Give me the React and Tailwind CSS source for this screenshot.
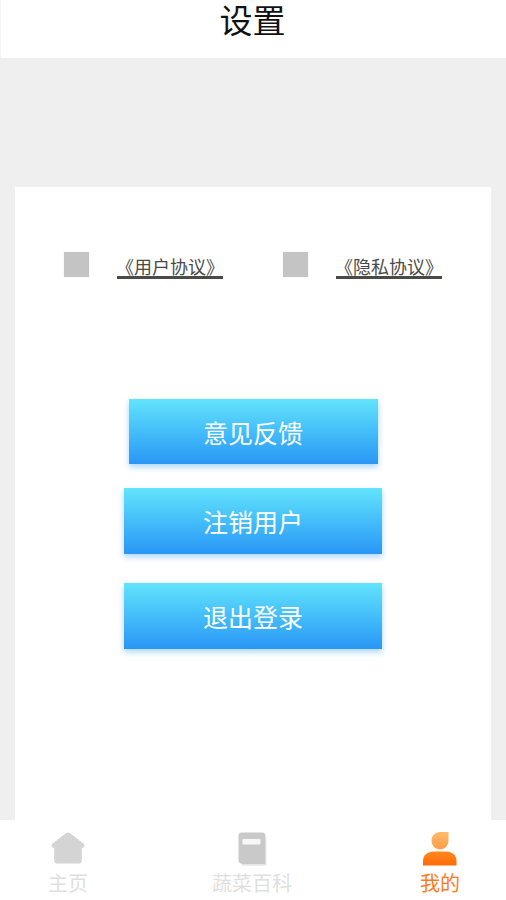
const cjk = { fontFamily: '"Noto Sans CJK SC", "Liberation Sans", sans-serif' };

function Agreement({ label }) {
  return (
    <div className="flex items-start">
      <div className="w-[25px] h-[25px] bg-[#c4c4c4] shadow-[0_0_1px_#dddddd]" />
      <div className="ml-[28px] mt-[3px] w-[106px] flex flex-col items-center">
        <span className="text-[18px] leading-[22px] text-[#4a4a48] whitespace-nowrap">{label}</span>
        <div className="h-[3px] w-[106px] bg-[#4a4a46] -mt-[1px]" />
      </div>
    </div>
  );
}

function ActionButton({ label, className }) {
  return (
    <button className={`flex items-center justify-center pt-[2px] bg-gradient-to-b from-[#62e4fb] to-[#2a96f5] shadow-[0_3px_6px_rgba(42,150,245,0.4)] text-white text-[25px] ${className}`}>
      {label}
    </button>
  );
}

function HomeIcon() {
  return (
    <svg width="34" height="32" viewBox="0 0 34 32" fill="#d4d4d4">
      <path d="M17 0.5 Q18 0.5 19 1.3 L32.5 11.5 Q34 13 33 15 L30.8 16.2 L30.8 28.5 Q30.8 31.5 27.8 31.5 L6.2 31.5 Q3.2 31.5 3.2 28.5 L3.2 16.2 L1 15 Q0 13 1.5 11.5 L15 1.3 Q16 0.5 17 0.5 Z" />
    </svg>
  );
}

function BookIcon() {
  return (
    <svg width="30" height="34" viewBox="0 0 30 34">
      <path d="M4.5 0.5 H25 Q28.5 0.5 28.5 4 V32 H5.5 Q1.5 31.5 1.5 28 V4 Q1.5 0.5 4.5 0.5 Z" fill="#c9c9c9" />
      <path d="M28.7 6 V32.8 H5" fill="none" stroke="#dedede" strokeWidth="1.2" />
      <rect x="5.5" y="7" width="18" height="5.5" rx="1" fill="#f7f7f7" />
    </svg>
  );
}

function UserIcon() {
  return (
    <svg width="34" height="34" viewBox="0 0 34 34">
      <defs>
        <linearGradient id="head" x1="0" y1="0" x2="0" y2="1">
          <stop offset="0" stopColor="#fdbc6b" />
          <stop offset="1" stopColor="#fd9c45" />
        </linearGradient>
        <linearGradient id="body" x1="0" y1="0" x2="0" y2="1">
          <stop offset="0" stopColor="#ff8a1f" />
          <stop offset="1" stopColor="#ff6a07" />
        </linearGradient>
      </defs>
      <path d="M16 0 H25.5 V9 A8.5 8.5 0 1 1 8.5 9 A8.5 8.5 0 0 1 16 0 Z" fill="url(#head)" />
      <path d="M0 33.5 V29 C0 23 5 19.5 10.5 19.5 H23.5 C29 19.5 33.5 23 33.5 29 V33.5 Z" fill="url(#body)" />
    </svg>
  );
}

function Tab({ icon, label, active, className }) {
  return (
    <div className={`flex flex-col items-center ${className}`}>
      <div className="h-[34px] flex items-start justify-center">{icon}</div>
      <span className={`mt-[3px] text-[20px] leading-[28px] whitespace-nowrap ${active ? 'text-[#ff7a1a]' : 'text-[#dfdfdf]'}`}>{label}</span>
    </div>
  );
}

export default function App() {
  return (
    <div className="relative w-[506px] h-[900px] overflow-hidden bg-[#efefef] flex flex-col" style={cjk}>
      <header className="h-[58px] bg-white border-l border-[#f5f5f5] pr-[2px] flex justify-center shrink-0">
        <h1 className="text-[33px] leading-[38px] text-[#111]">设置</h1>
      </header>

      <main className="mt-[129px] mx-[15px] flex-1 bg-white flex flex-col items-center">
        <div className="mt-[65px] self-start ml-[49px] flex gap-[60px]">
          <Agreement label="《用户协议》" />
          <Agreement label="《隐私协议》" />
        </div>
        <ActionButton label="意见反馈" className="mt-[120px] w-[249px] h-[65px]" />
        <ActionButton label="注销用户" className="mt-[24px] w-[258px] h-[66px]" />
        <ActionButton label="退出登录" className="mt-[29px] w-[258px] h-[66px]" />
      </main>

      <nav className="absolute bottom-0 left-0 right-0 h-[80px] bg-white pt-[12px] flex pl-[48px]">
        <Tab icon={<HomeIcon />} label="主页" className="w-[40px]" />
        <Tab icon={<BookIcon />} label="蔬菜百科" className="ml-[124px] w-[80px]" />
        <Tab icon={<UserIcon />} label="我的" active className="ml-[128px] w-[40px]" />
      </nav>
    </div>
  );
}
